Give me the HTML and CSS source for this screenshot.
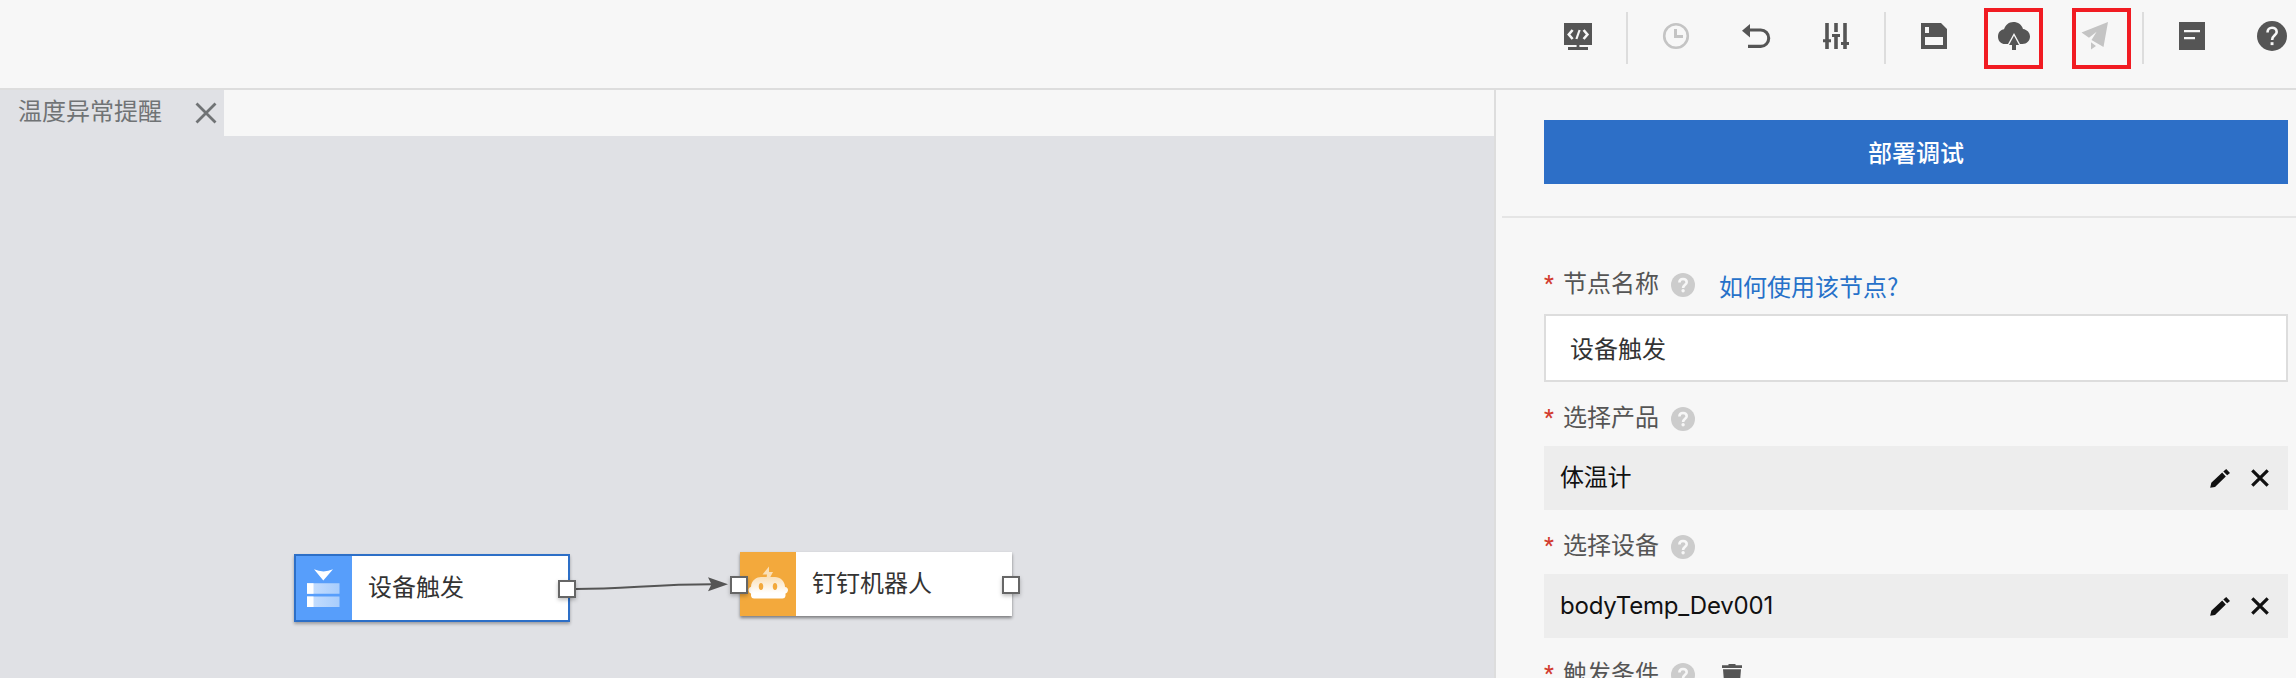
FILE: index.html
```html
<!DOCTYPE html>
<html lang="zh-CN">
<head>
<meta charset="utf-8">
<title>温度异常提醒</title>
<link rel="stylesheet" href="styles.css">
</head>
<body>
<svg width="0" height="0" class="defs">
  <defs>
    <symbol id="help" viewBox="0 0 32 32"><circle cx="16" cy="16" r="15" fill="currentColor"/><path d="M11.5 12.4C11.5 9.2 13.5 7.7 16 7.7S20.7 9.3 20.7 12C20.7 15.2 16.1 15.6 16.1 19.9" fill="none" stroke="#f7f7f7" stroke-width="2.6"/><rect x="14.6" y="22.2" width="2.9" height="2.9" fill="#f7f7f7"/></symbol>
    <symbol id="hint" viewBox="0 0 24 24"><circle cx="12" cy="12" r="12" fill="#ccc"/><path d="M8.4 9.6C8.4 7 10 6 12 6S15.7 7.1 15.7 9.2C15.7 11.7 12.1 11.9 12.1 15" fill="none" stroke="#f7f7f7" stroke-width="2.6"/><circle cx="12.1" cy="17.8" r="1.7" fill="#f7f7f7"/></symbol>
    <symbol id="pencil" viewBox="0 0 20 19"><path d="M.2 18.8 1.3 13.8 12.2 3.6 15.8 7.5 5 18 .2 18.8ZM13.3 2.6 16.2 0 20 3.9 17.2 6.3Z" fill="#111"/></symbol>
    <symbol id="cross" viewBox="0 0 18 18"><path d="M1.3 1.3 16.7 16.7M16.7 1.3 1.3 16.7" fill="none" stroke="#111" stroke-width="3.2"/></symbol>
  </defs>
</svg>
<div class="app">
  <header class="toolbar">
    <div class="tool"><svg viewBox="0 0 32 32"><path d="M2 3h28v22H17.4v2H26v3H6v-3h8.6v-2H2Z" fill="#555"/><path d="M10.6 10 6.8 14.5 10.6 19M21.6 10 25.4 14.5 21.6 19" fill="none" stroke="#f7f7f7" stroke-width="2.6"/><path d="M17.6 10 14.4 19" stroke="#f7f7f7" stroke-width="2.2"/></svg></div>
    <i class="sep"></i>
    <div class="tool"><svg viewBox="0 0 32 32"><circle cx="16" cy="16" r="11.8" fill="none" stroke="#c4c4c4" stroke-width="2.6"/><path d="M14 9h3v6h6v3h-9Z" fill="#c4c4c4"/></svg></div>
    <div class="tool"><svg viewBox="0 0 32 32"><path d="M8.5 10H20.8a7.9 8.2 0 0 1 0 16.4H8" fill="none" stroke="#555" stroke-width="3.1"/><path d="M2 10.8 10 4V17.6Z" fill="#555"/></svg></div>
    <div class="tool"><svg viewBox="0 0 32 32"><path d="M5.2 3h3.6v16.2H11v3H8.8V29H5.2v-6.8H3v-3h2.2ZM14.2 3h3.6v9h-3.6ZM12 14h8v3h-2.2v12h-3.6V17H12ZM23.2 3h3.6v19H29v3h-2.2v4h-3.6v-4H21v-3h2.2Z" fill="#555"/></svg></div>
    <i class="sep"></i>
    <div class="tool"><svg viewBox="0 0 32 32"><path fill-rule="evenodd" d="M3 3H23L29 9V29H3ZM7 7v6h4V7ZM7 17v8h18v-8Z" fill="#555"/></svg></div>
    <div class="tool"><svg viewBox="0 0 32 32"><path d="M5.500 24C2.300 23.200 0 20.500 0 16.800 0 12.400 2.600 9.800 6 9.300 7.500 4.800 11 2 15.300 2 20 2 23.600 4.600 25 8.900 29.200 9.600 32 12.600 32 16.500 32 20.800 28.800 24 24.400 24H22L16 13 10 24Z" fill="#555"/><path d="M16 15.800 21 25H18V30H14V25H11Z" fill="#555"/></svg><span class="mark mark-deploy"></span></div>
    <div class="tool"><svg viewBox="0 0 32 32"><path d="M30 2 3.500 12.400 11 17.800 18.600 11.800 13.500 20 25.500 27ZM13 22.300 18 26 13 29.400Z" fill="#c4c4c4"/></svg><span class="mark mark-publish"></span></div>
    <i class="sep"></i>
    <div class="tool"><svg viewBox="0 0 32 32"><path d="M3 2h26v28H3Z" fill="#555"/><path d="M8 10h16v2.300H8ZM8 17h11v2.300H8Z" fill="#f7f7f7"/></svg></div>
    <div class="tool dark"><svg><use href="#help"/></svg></div>
  </header>
  <div class="body">
    <main class="editor">
      <div class="tabs">
        <div class="tab"><span>温度异常提醒</span><svg class="close" viewBox="0 0 22 22"><path d="M1.500 1.500 20.500 20.500M20.500 1.500 1.500 20.500" stroke="#707375" stroke-width="2.800"/></svg></div>
      </div>
      <div class="canvas">
        <svg class="wire" viewBox="0 0 160 20"><path d="M2 13C52 13 80 8.300 138 8.300" fill="none" stroke="#555" stroke-width="2"/><path d="M134 1.300 154 8.300 134 15.300 137.500 8.300Z" fill="#555"/></svg>
        <div class="node node-trigger">
          <div class="node-icon blue"><svg viewBox="0 0 56 64"><defs><linearGradient id="bar"><stop offset="0" stop-color="#c9e0fe"/><stop offset="1" stop-color="#a8cdfc"/></linearGradient></defs><path d="M18 13.300Q27.500 17.500 37 13.300L27.300 24.500Z" fill="#fff"/><path d="M11 27.300h32.500v10.400H11ZM11 40.500h32.500v10.400H11Z" fill="url(#bar)"/><path d="M11 27.300h6.500v10.400H11ZM11 40.500h6.500v10.400H11Z" fill="#fff"/></svg></div>
          <span>设备触发</span><i class="port out"></i>
        </div>
        <div class="node node-robot">
          <div class="node-icon orange"><svg viewBox="0 0 56 64"><defs><linearGradient id="bot" x2="0" y2="1"><stop offset="0" stop-color="#fae0b8"/><stop offset=".75" stop-color="#fff"/></linearGradient></defs><path fill="#fae0b8" d="M29 14.500 22.500 22.500h4.500l-.5 4H29.500l3.500-6.500h-4Z"/><path fill="url(#bot)" fill-rule="evenodd" d="M11 35C11 28 17 25 21 25H35C40 25 45 29 45 35 47 35 48 36.500 48 38S47 41 45.500 41.500V44Q45 46.500 42.500 46.500H14Q11.500 46.500 11 44V41.500C9.500 41 8.500 39.500 8.500 38S9.500 35 11 35ZM21 31c-3 0-3 7 0 7s3-7 0-7ZM35 31c-3 0-3 7 0 7s3-7 0-7Z"/></svg></div>
          <span>钉钉机器人</span><i class="port in"></i><i class="port out"></i>
        </div>
      </div>
    </main>
    <aside class="panel">
      <div class="actions"><button class="deploy">部署调试</button></div>
      <div class="form">
        <div class="label first"><b>*</b><span>节点名称</span><svg><use href="#hint"/></svg><a>如何使用该节点?</a></div>
        <div class="input">设备触发</div>
        <div class="label"><b>*</b><span>选择产品</span><svg><use href="#hint"/></svg></div>
        <div class="picked"><span>体温计</span><svg class="edit"><use href="#pencil"/></svg><svg class="remove"><use href="#cross"/></svg></div>
        <div class="label"><b>*</b><span>选择设备</span><svg><use href="#hint"/></svg></div>
        <div class="picked"><span>bodyTemp_Dev001</span><svg class="edit"><use href="#pencil"/></svg><svg class="remove"><use href="#cross"/></svg></div>
        <div class="label"><b>*</b><span>触发条件</span><svg><use href="#hint"/></svg><svg class="trash" viewBox="0 0 20 24"><path d="M0 1.300H6.500V0h7v1.300H20V4H0ZM1 5.300H19L17.500 24H2.500Z" fill="#555"/></svg></div>
      </div>
    </aside>
  </div>
</div>
</body>
</html>
```
FILE: styles.css
```css
* { box-sizing: border-box; }
body { margin: 0; background: #f7f7f7; font: 24px/32px Inter, "Noto Sans CJK SC", sans-serif; color: #333; }
svg { display: block; flex: none; }
.defs { position: absolute; }
.app { height: 678px; overflow: hidden; display: flex; flex-direction: column; }

.toolbar { flex: none; height: 90px; border-bottom: 2px solid #ddd; display: flex; align-items: flex-start; justify-content: flex-end; overflow: hidden; }
.tool { position: relative; flex: none; width: 80px; height: 72px; display: flex; align-items: center; justify-content: center; }
.tool:last-child { margin-right: -16px; }
.tool svg { width: 32px; height: 32px; }
.dark { color: #555; }
.sep { flex: none; width: 2px; height: 52px; margin: 12px 8px 0; background: #ddd; }
.mark { position: absolute; top: 8px; width: 59px; height: 61px; border: 4px solid #f11b22; }
.mark-deploy { left: 10px; }
.mark-publish { left: 18px; }

.body { flex: 1; min-height: 0; display: flex; }
.editor { flex: 1; display: flex; flex-direction: column; }
.tabs { height: 46px; display: flex; }
.tab { width: 224px; padding: 0 7px 3px 18px; background: #e0e1e5; color: #707375; display: flex; align-items: center; justify-content: space-between; }
.close { width: 22px; height: 22px; margin-top: 3px; }
.canvas { position: relative; flex: 1; background: #e0e1e5; }

.wire { position: absolute; left: 574px; top: 440px; width: 160px; height: 20px; }
.node { position: absolute; display: flex; align-items: center; background: #fff; box-shadow: 0 2px 3px rgba(0,0,0,.45); }
.node-trigger { left: 294px; top: 418px; width: 276px; height: 68px; border: 2px solid #2d6fc7; box-shadow: 0 2px 3px rgba(0,0,0,.3); }
.node-robot { left: 740px; top: 416px; width: 272px; height: 64px; }
.node-icon { width: 56px; height: 64px; margin-right: 16px; }
.node-icon svg { width: 56px; height: 64px; }
.blue { background: #579efb; }
.orange { background: #f3a93c; }
.port { position: absolute; top: 24px; width: 18px; height: 18px; border: 2px solid #666; background: #fff; box-shadow: 0 2px 4px rgba(0,0,0,.25); }
.port.in { left: -10px; }
.port.out { right: -8px; }

.panel { flex: none; width: 802px; border-left: 2px solid #ddd; }
.actions { margin-left: 6px; padding: 30px 8px 32px 42px; border-bottom: 2px solid #e5e5e5; }
.deploy { display: block; width: 100%; height: 64px; padding: 0; border: 0; background: #2d6fc7; color: #fff; font: 500 24px/64px "Noto Sans CJK SC", sans-serif; }
.form { padding: 32px 8px 0 48px; }
.label { height: 64px; display: flex; align-items: center; color: #555; }
.label.first { padding-bottom: 4px; }
.label span { width: 108px; margin-top: 8px; }
.label b { width: 19px; margin-top: 7px; color: #d23c2f; font: 500 22px/32px Roboto, sans-serif; }
.label svg { width: 24px; height: 24px; margin-top: 10px; }
.label .trash { width: 20px; margin-left: 27px; margin-top: 12px; }
.label a { margin-left: 24px; margin-top: 12px; color: #2671c9; font-family: "Noto Sans CJK SC", sans-serif; }
.input { height: 68px; padding: 2px 24px 0; border: 2px solid #ddd; background: #fff; line-height: 64px; }
.picked { height: 64px; padding: 0 19px 0 16px; background: #ededed; color: #111; display: flex; align-items: center; }
.picked span { flex: 1; letter-spacing: -.2px; }
.edit { width: 20px; height: 19px; }
.remove { width: 18px; height: 18px; margin-left: 21px; }
```
